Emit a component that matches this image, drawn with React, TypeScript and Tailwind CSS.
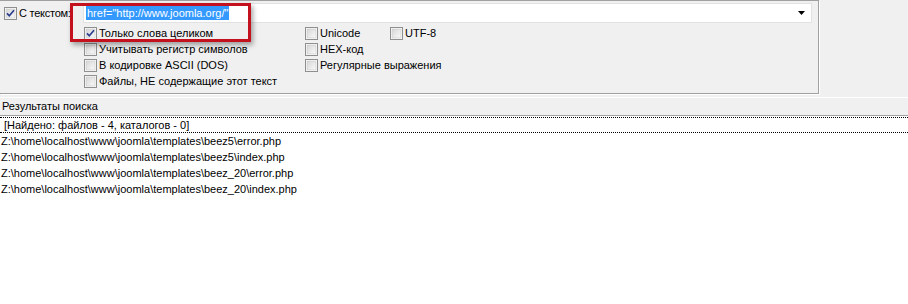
import React from 'react'

function CheckBox({ checked = false }: { checked?: boolean }) {
  return (
    <svg width="13" height="13" viewBox="0 0 13 13" className="shrink-0">
      <defs>
        <linearGradient id="cbfill" x1="0" y1="0" x2="1" y2="1">
          <stop offset="0" stopColor="#d6d6d6" />
          <stop offset="1" stopColor="#fafafa" />
        </linearGradient>
      </defs>
      <rect x="0.5" y="0.5" width="12" height="12" fill="#fff" stroke="#8e8f8f" />
      <rect x="2" y="2" width="9" height="9" fill="url(#cbfill)" stroke="#c6c6c6" strokeWidth="0.6" />
      {checked && (
        <path d="M3 6.3 L5.3 8.8 L10 3.2" fill="none" stroke="#2a3f8f" strokeWidth="1.7" />
      )}
    </svg>
  )
}

function Option({ label, checked }: { label: string; checked?: boolean }) {
  return (
    <div className="h-[16px] flex items-center gap-[2px] whitespace-nowrap">
      <CheckBox checked={checked} />
      <span>{label}</span>
    </div>
  )
}

const results = [
  'Z:\\home\\localhost\\www\\joomla\\templates\\beez5\\error.php',
  'Z:\\home\\localhost\\www\\joomla\\templates\\beez5\\index.php',
  'Z:\\home\\localhost\\www\\joomla\\templates\\beez_20\\error.php',
  'Z:\\home\\localhost\\www\\joomla\\templates\\beez_20\\index.php',
]

export default function App() {
  return (
    <div className="w-[908px] h-[304px] bg-white flex flex-col overflow-hidden text-[11px] leading-none text-black font-['Liberation_Sans',Arial,sans-serif]">
      {/* search options */}
      <div className="h-[97px] shrink-0 bg-[#f0f0f0] flex">
        <div className="relative w-[819px] h-[94px] border-t border-r border-b border-[#a0a0a0] shadow-[1px_1px_0_#ffffff]">
          <div className="flex items-center pt-[2px]">
            <div className="ml-[4px] w-[13px]">
              <CheckBox checked />
            </div>
            <span className="ml-[2px] w-[52px] whitespace-nowrap tracking-[-0.25px]">С текстом:</span>
            <div className="ml-[12px] w-[729px] h-[20px] bg-white border border-[#e2e2e2] flex items-center">
              <span className="ml-[2px] h-[14px] px-px flex items-center bg-[#3399ff] text-white">
                href="http://www.joomla.org/"
              </span>
              <svg width="7" height="4" viewBox="0 0 7 4" className="ml-auto mr-[6px]">
                <path d="M0 0 H7 L3.5 4 Z" fill="#000" />
              </svg>
            </div>
          </div>

          <div className="mt-[2px] ml-[84px] grid grid-cols-[221px_85px_auto]">
            <Option label="Только слова целиком" checked />
            <Option label="Unicode" />
            <Option label="UTF-8" />
            <Option label="Учитывать регистр символов" />
            <Option label="HEX-код" />
            <div />
            <Option label="В кодировке ASCII (DOS)" />
            <Option label="Регулярные выражения" />
            <div />
            <Option label="Файлы, НЕ содержащие этот текст" />
          </div>

          {/* annotation frame */}
          <div className="absolute left-[70px] top-[2px] w-[181px] h-[39px] border-[3px] border-[#c3121d] shadow-[2px_3px_5px_rgba(0,0,0,0.35)]" />
        </div>
      </div>

      {/* results header */}
      <div className="h-[19px] shrink-0 bg-[#f0f0f0] border-t border-white border-b border-b-[#a0a0a0] flex items-center pl-[2px]">
        Результаты поиска
      </div>

      {/* results list */}
      <div className="flex-1 pt-px">
        <div className="h-[16px] border-y border-dotted border-black flex items-center pl-[4px] whitespace-nowrap">
          [Найдено: файлов - 4, каталогов - 0]
        </div>
        {results.map((r) => (
          <div key={r} className="h-[16px] flex items-center pl-[1px] whitespace-nowrap">
            {r}
          </div>
        ))}
      </div>
    </div>
  )
}
